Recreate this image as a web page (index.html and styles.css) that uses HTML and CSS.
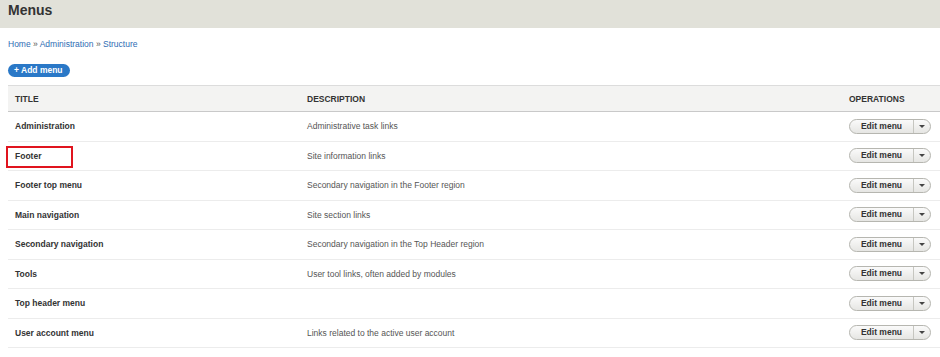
FILE: index.html
```html
<!DOCTYPE html>
<html lang="en">
<head>
    <meta charset="UTF-8">
    <title>Menus</title>
    <link rel="stylesheet" href="styles.css">
</head>
<body>

<div class="pageHeader">
    <h1>Menus</h1>
</div>

<div class="content">
    <div class="breadcrumb">
        <a href="#">Home</a> &raquo; <a href="#">Administration</a> &raquo; <a href="#">Structure</a>
    </div>

    <a href="#" class="addButton">+ Add menu</a>

    <table class="menuTable">
        <thead>
            <tr>
                <th class="colTitle">Title</th>
                <th>Description</th>
                <th class="colOps">Operations</th>
            </tr>
        </thead>
        <tbody>
            <tr>
                <td class="menuName">Administration</td>
                <td>Administrative task links</td>
                <td class="colOps"><div class="dropButton"><span class="dropMain">Edit menu</span><span class="dropToggle"></span></div></td>
            </tr>
            <tr>
                <td class="menuName highlighted">Footer</td>
                <td>Site information links</td>
                <td class="colOps"><div class="dropButton"><span class="dropMain">Edit menu</span><span class="dropToggle"></span></div></td>
            </tr>
            <tr>
                <td class="menuName">Footer top menu</td>
                <td>Secondary navigation in the Footer region</td>
                <td class="colOps"><div class="dropButton"><span class="dropMain">Edit menu</span><span class="dropToggle"></span></div></td>
            </tr>
            <tr>
                <td class="menuName">Main navigation</td>
                <td>Site section links</td>
                <td class="colOps"><div class="dropButton"><span class="dropMain">Edit menu</span><span class="dropToggle"></span></div></td>
            </tr>
            <tr>
                <td class="menuName">Secondary navigation</td>
                <td>Secondary navigation in the Top Header region</td>
                <td class="colOps"><div class="dropButton"><span class="dropMain">Edit menu</span><span class="dropToggle"></span></div></td>
            </tr>
            <tr>
                <td class="menuName">Tools</td>
                <td>User tool links, often added by modules</td>
                <td class="colOps"><div class="dropButton"><span class="dropMain">Edit menu</span><span class="dropToggle"></span></div></td>
            </tr>
            <tr>
                <td class="menuName">Top header menu</td>
                <td></td>
                <td class="colOps"><div class="dropButton"><span class="dropMain">Edit menu</span><span class="dropToggle"></span></div></td>
            </tr>
            <tr>
                <td class="menuName">User account menu</td>
                <td>Links related to the active user account</td>
                <td class="colOps"><div class="dropButton"><span class="dropMain">Edit menu</span><span class="dropToggle"></span></div></td>
            </tr>
        </tbody>
    </table>
</div>

</body>
</html>
```

FILE: styles.css
```css
body {
    font-family: "Liberation Sans", Arial, sans-serif;
    margin: 0;
    background: #fff;
    color: #333;
}
.pageHeader {
    background-color: #e1e1d9;
    height: 28px;
    padding: 0 8px;
}
h1 {
    margin: 0;
    font-size: 14px;
    line-height: 21px;
    font-weight: bold;
    color: #333;
}
.content {
    padding: 0 0 0 8px;
}
.breadcrumb {
    font-size: 8.5px;
    color: #555;
    padding-top: 11px;
    height: 20px;
    line-height: 10px;
}
.breadcrumb a {
    color: #2e6db4;
    text-decoration: none;
}
.addButton {
    display: inline-block;
    background-color: #2a78c7;
    color: #fff;
    font-size: 8.5px;
    font-weight: bold;
    text-decoration: none;
    padding: 0 7px 0 6px;
    height: 13px;
    line-height: 13px;
    border-radius: 8px;
}
.menuTable {
    width: 100%;
    border-collapse: collapse;
    margin-top: 8px;
    font-size: 8.5px;
}
.menuTable th {
    text-align: left;
    text-transform: uppercase;
    font-weight: bold;
    color: #333;
    background: #f3f3f2;
    border-top: 1px solid #dcdcdc;
    border-bottom: 1px solid #c9c9c9;
    height: 25px;
    padding: 0 0 0 7px;
}
.menuTable td {
    height: 28.5px;
    padding: 0 0 0 7px;
    border-bottom: 1px solid #ececec;
    color: #555;
}
.menuTable td.menuName {
    font-weight: bold;
    color: #333;
}
.colTitle {
    width: 285px;
}
.colOps {
    width: 84px;
    padding-right: 7px !important;
}
.highlighted {
    position: relative;
}
.highlighted::after {
    content: "";
    position: absolute;
    left: -2px;
    top: 4px;
    width: 63px;
    height: 18px;
    border: 2px solid #e0141e;
}
.dropButton {
    display: flex;
    height: 15px;
    width: 82px;
    border: 1px solid #b6b6b0;
    border-radius: 8px;
    background: linear-gradient(#fafafa, #e6e6e3);
    box-sizing: border-box;
    font-size: 8.5px;
    font-weight: bold;
    color: #333;
}
.dropMain {
    flex: 1;
    text-align: center;
    line-height: 13px;
    border-right: 1px solid #c6c6c0;
}
.dropToggle {
    width: 16px;
    position: relative;
}
.dropToggle::after {
    content: "";
    position: absolute;
    left: 5px;
    top: 5px;
    border-left: 3px solid transparent;
    border-right: 3px solid transparent;
    border-top: 3px solid #444;
}
```
